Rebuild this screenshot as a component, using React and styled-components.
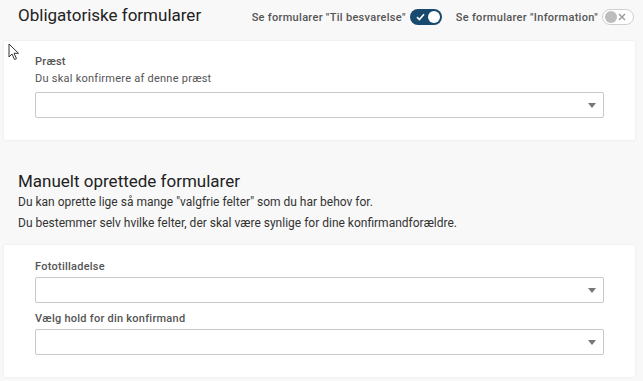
import React from "react";
import styled, { createGlobalStyle } from "styled-components";

const GlobalStyle = createGlobalStyle`
  body {
    margin: 0;
    background: #f8f8f8;
    font-family: Roboto, "Liberation Sans", sans-serif;
    color: #222;
  }
`;

function Caret() {
  return (
    <svg width="8" height="5" viewBox="0 0 8 5">
      <path d="M0 0 H8 L4 5 Z" fill="#777" />
    </svg>
  );
}

function Select() {
  return (
    <SelectBox>
      <Caret />
    </SelectBox>
  );
}

function Toggle({ on }) {
  return (
    <Switch $on={on}>
      {on ? (
        <>
          <svg width="9" height="8" viewBox="0 0 9 8">
            <path d="M1 4.2 L3.4 6.5 L8 1.2" stroke="#fff" strokeWidth="1.6" fill="none" />
          </svg>
          <Knob $on={on} />
        </>
      ) : (
        <>
          <Knob $on={on} />
          <svg width="8" height="8" viewBox="0 0 8 8">
            <path d="M1 1 L7 7 M7 1 L1 7" stroke="#999" strokeWidth="1.4" />
          </svg>
        </>
      )}
    </Switch>
  );
}

function Cursor() {
  return (
    <Pointer width="12" height="18" viewBox="0 0 12 18">
      <path d="M1 1 L1 14 L4 11 L6.5 16.5 L8.5 15.6 L6 10.3 L10.5 10.3 Z" fill="#fff" stroke="#333" strokeWidth="1" strokeLinejoin="round" />
    </Pointer>
  );
}

export default function App() {
  return (
    <Page>
      <GlobalStyle />
      <Header>
        <Title>Obligatoriske formularer</Title>
        <Toggles>
          <ToggleLabel>Se formularer "Til besvarelse"</ToggleLabel>
          <Toggle on />
          <ToggleLabel $gap="10px">Se formularer "Information"</ToggleLabel>
          <Toggle on={false} />
        </Toggles>
      </Header>

      <Card $pad="14px 31px 22px">
        <FieldLabel>Præst</FieldLabel>
        <FieldHint>Du skal konfirmere af denne præst</FieldHint>
        <Select />
      </Card>

      <Section>
        <Title>Manuelt oprettede formularer</Title>
        <Text>Du kan oprette lige så mange "valgfrie felter" som du har behov for.</Text>
        <Text>Du bestemmer selv hvilke felter, der skal være synlige for dine konfirmandforældre.</Text>
      </Section>

      <Card $pad="15px 31px 22px">
        <FieldLabel>Fototilladelse</FieldLabel>
        <Select />
        <FieldLabel $top="9px">Vælg hold for din konfirmand</FieldLabel>
        <Select />
      </Card>

      <Cursor />
    </Page>
  );
}

// ::::::::::Styled-Components::::::::::
const Page = styled.div`
  width: 643px;
  height: 381px;
  position: relative;
  overflow: hidden;
  padding: 0 8px 0 4px;
  box-sizing: border-box;
`;
const Header = styled.div`
  height: 34px;
  padding: 4px 0 0 14px;
  box-sizing: border-box;
  display: flex;
  align-items: flex-start;
  justify-content: space-between;
`;
const Title = styled.h1`
  margin: 0;
  font-size: 17px;
  font-weight: 400;
  line-height: 22px;
  color: #222;
`;
const Toggles = styled.div`
  display: flex;
  align-items: center;
  gap: 4px;
  margin-top: 5px;
  margin-right: 1px;
`;
const ToggleLabel = styled.span`
  font-size: 11px;
  font-weight: 500;
  letter-spacing: 0.3px;
  color: #555;
  margin-left: ${(p) => p.$gap || "0"};
`;
const Switch = styled.div`
  width: 32px;
  height: 16px;
  border-radius: 9px;
  box-sizing: border-box;
  display: flex;
  align-items: center;
  justify-content: space-between;
  padding: 0 ${(p) => (p.$on ? "2px" : "7px")} 0 ${(p) => (p.$on ? "6px" : "2px")};
  background: ${(p) => (p.$on ? "#174a6e" : "#fff")};
  border: ${(p) => (p.$on ? "none" : "1px solid #cfcfcf")};
`;
const Knob = styled.span`
  width: 12px;
  height: 12px;
  border-radius: 50%;
  background: ${(p) => (p.$on ? "#fff" : "#bdbdbd")};
`;
const Card = styled.div`
  margin-top: 7px;
  background: #fff;
  padding: ${(p) => p.$pad};
  box-shadow: 0 0 3px rgba(0, 0, 0, 0.08);
  border-radius: 2px;
`;
const FieldLabel = styled.div`
  font-size: 11px;
  font-weight: 500;
  letter-spacing: 0.25px;
  color: #555;
  line-height: 14px;
  margin-top: ${(p) => p.$top || "0"};
  margin-bottom: 3px;
`;
const FieldHint = styled.div`
  font-size: 11px;
  letter-spacing: 0.25px;
  color: #555;
  line-height: 14px;
  margin-top: 2px;
  margin-bottom: 6px;
`;
const SelectBox = styled.div`
  height: 26px;
  border: 1px solid #c9c9c9;
  border-radius: 2px;
  box-sizing: border-box;
  background: #fff;
  display: flex;
  align-items: center;
  justify-content: flex-end;
  padding-right: 7px;
`;
const Section = styled.div`
  padding: 30px 0 0 14px;
  height: 98px;
  box-sizing: border-box;
`;
const Text = styled.p`
  margin: 0;
  font-size: 12px;
  line-height: 21px;
  color: #333;
`;
const Pointer = styled.svg`
  position: absolute;
  left: 8px;
  top: 43px;
`;
